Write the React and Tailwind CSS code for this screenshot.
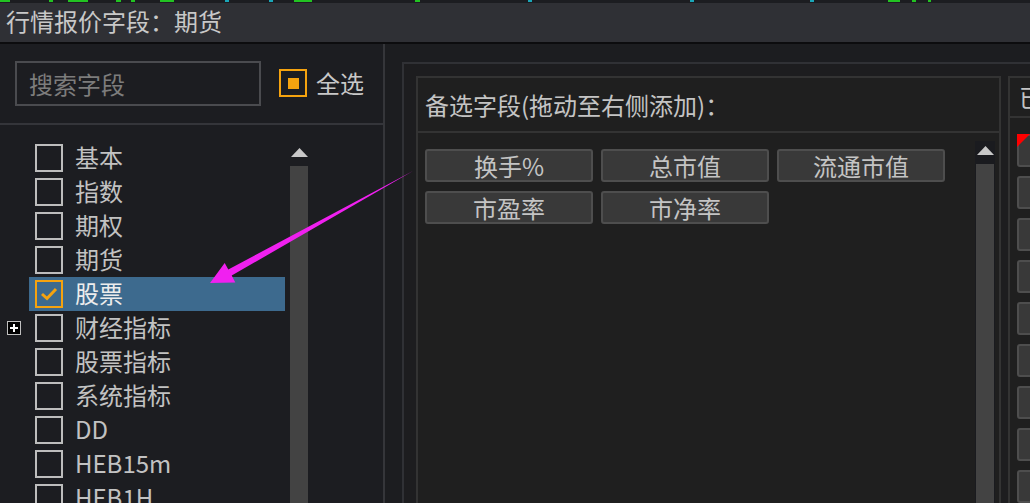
import React from 'react'

const FONT = { fontFamily: '"Microsoft YaHei", "Noto Sans CJK SC", "Noto Sans", sans-serif' }

const TREE = [
    { label: '基本' },
    { label: '指数' },
    { label: '期权' },
    { label: '期货' },
    { label: '股票', checked: true },
    { label: '财经指标', plus: true },
    { label: '股票指标' },
    { label: '系统指标' },
    { label: 'DD' },
    { label: 'HEB15m' },
    { label: 'HEB1H' },
]

const FIELDS = ['换手%', '总市值', '流通市值', '市盈率', '市净率']

// bits of the row cut off above the title bar
const TOP_BITS = [
    [0, 10, '#22c322'], [49, 4, '#22c322'], [68, 20, '#22c322'], [116, 5, '#22c322'],
    [131, 4, '#22c322'], [160, 14, '#22c322'], [225, 4, '#1aa6b8'], [269, 4, '#1aa6b8'],
    [294, 18, '#22c322'], [415, 5, '#22c322'], [528, 4, '#1aa6b8'], [690, 4, '#1aa6b8'],
    [810, 4, '#1aa6b8'], [888, 12, '#22c322'], [912, 4, '#22c322'], [928, 3, '#22c322'],
]

function Checkbox({ checked }) {
    if (checked) {
        return (
            <div className="w-[28px] h-[28px] border-2 border-[#f5a30f] flex items-center justify-center shrink-0">
                <svg width="18" height="14" viewBox="0 0 18 14">
                    <path d="M2 7 L7 11.5 L16 2" fill="none" stroke="#f5a30f" strokeWidth="3" />
                </svg>
            </div>
        )
    }
    return <div className="w-[28px] h-[28px] border-2 border-[#bdbdbd] shrink-0" />
}

function Scrollbar({ dark }) {
    return (
        <div className={`w-[20px] h-full flex flex-col items-center pt-[5px] ${dark ? 'bg-[#1a1b1f]' : ''}`}>
            <svg width="17" height="9" viewBox="0 0 17 9"><path d="M8.5 0 L17 9 L0 9 Z" fill="#c8c8c8" /></svg>
            <div className="mt-[9px] w-[18px] flex-1 bg-[#434343]" />
        </div>
    )
}

function FieldButton({ label }) {
    return (
        <div className="w-[168px] h-[33px] rounded-[3px] border-2 border-[#4e4e4e] bg-[#393939] flex items-center justify-center text-[24px] text-[#c4c4c4] leading-none">
            {label}
        </div>
    )
}

export default function App() {
    return (
        <div className="relative w-[1030px] h-[503px] overflow-hidden bg-[#1c1d21] flex flex-col" style={FONT}>
            <div className="relative h-[3px] bg-[#1c1d21] shrink-0">
                {TOP_BITS.map(([x, w, c]) => (
                    <span key={x} className="absolute top-0 h-[2px]" style={{ left: x, width: w, background: c }} />
                ))}
            </div>
            <div className="h-[39px] bg-[#2f3035] flex items-center pl-[6px] pb-[3px] text-[24px] leading-none text-[#c8c8c8] shrink-0">
                行情报价字段：期货
            </div>
            <div className="h-[2px] bg-[#0c0c0e] shrink-0" />

            <div className="flex flex-1 min-h-0">
                {/* left panel */}
                <div className="w-[383px] flex flex-col shrink-0">
                    <div className="h-[79px] flex items-start pt-[17px] pl-[15px]">
                        <div className="w-[246px] h-[45px] border-2 border-[#4a4b4f] flex items-center pl-[12px] text-[24px] leading-none text-[#7c7c7c]">
                            搜索字段
                        </div>
                        <div className="ml-[18px] mt-[8px] w-[28px] h-[28px] border-2 border-[#f5a30f] flex items-center justify-center">
                            <div className="w-[11px] h-[11px] bg-[#f5a30f]" />
                        </div>
                        <div className="ml-[9px] mt-[10px] text-[24px] leading-none text-[#c8c8c8]">全选</div>
                    </div>
                    <div className="h-[2px] bg-[#34353a]" />
                    <div className="flex flex-1 min-h-0">
                        <div className="w-[285px] pt-[16px]">
                            {TREE.map((t) => (
                                <div key={t.label} className="flex h-[34px]">
                                    <div className="w-[29px] flex items-center pl-[7px]">
                                        {t.plus && (
                                            <div className="w-[14px] h-[14px] border border-[#c0c0c0] bg-black flex items-center justify-center">
                                                <svg width="10" height="10" viewBox="0 0 10 10">
                                                    <path d="M5 1 V9 M1 5 H9" stroke="#ffffff" strokeWidth="2" />
                                                </svg>
                                            </div>
                                        )}
                                    </div>
                                    <div className={`flex-1 flex items-center pl-[6px] gap-[12px] text-[24px] ${t.checked ? 'bg-[#3d6a8e] text-[#ececec]' : 'text-[#c2c2c2]'}`}>
                                        <Checkbox checked={t.checked} />
                                        <span className="leading-none -mt-[2px] whitespace-nowrap">{t.label}</span>
                                    </div>
                                </div>
                            ))}
                        </div>
                        <div className="w-[4px]" />
                        <div className="pt-[18px] h-full">
                            <Scrollbar />
                        </div>
                    </div>
                </div>
                <div className="w-[2px] bg-[#35363a] shrink-0" />

                {/* right area */}
                <div className="flex-1 pl-[17px] pt-[18px] bg-[#1c1d20]">
                    <div className="h-full border-t-2 border-l-2 border-[#303135] bg-[#1d1d1f] pl-[12px] pt-[12px] flex gap-[7px]">
                        <div className="w-[585px] h-full border-2 border-b-0 border-[#333333] bg-[#1f1f1f] flex flex-col shrink-0">
                            <div className="h-[55px] border-b-2 border-[#333333] flex items-center pl-[7px] text-[24px] leading-none text-[#c4c4c4]">
                                备选字段(拖动至右侧添加)：
                            </div>
                            <div className="flex flex-1 min-h-0">
                                <div className="flex-1 pl-[7px] pt-[16px]">
                                    <div className="grid grid-cols-[168px_168px_168px] gap-x-[8px] gap-y-[9px]">
                                        {FIELDS.map((f) => <FieldButton key={f} label={f} />)}
                                    </div>
                                </div>
                                <div className="pt-[8px] pr-[4px] h-full">
                                    <Scrollbar dark />
                                </div>
                            </div>
                        </div>
                        <div className="flex-1 h-full border-2 border-r-0 border-b-0 border-[#333333] bg-[#1f1f1f] flex flex-col overflow-hidden">
                            <div className="h-[55px] border-b-2 border-[#333333] flex items-center pl-[9px] text-[24px] leading-none text-[#c4c4c4] whitespace-nowrap">
                                已选
                            </div>
                            <div className="relative pl-[7px] pt-[16px] flex flex-col gap-[9px]">
                                {Array.from({ length: 9 }).map((_, i) => (
                                    <div key={i} className="w-[168px] h-[33px] rounded-[3px] border-2 border-[#4e4e4e] bg-[#393939] shrink-0" />
                                ))}
                                <svg className="absolute left-[7px] top-[16px]" width="13" height="13" viewBox="0 0 13 13">
                                    <path d="M0 0 H13 L0 13 Z" fill="#ff0000" />
                                </svg>
                            </div>
                        </div>
                    </div>
                </div>
            </div>

            <svg className="absolute inset-0 pointer-events-none" width="1030" height="503" viewBox="0 0 1030 503">
                <polygon points="413,171 231.7,275.6 235.3,282.5 210,283 224.7,262.9 228.3,269.4" fill="#f020f0" />
            </svg>
        </div>
    )
}
